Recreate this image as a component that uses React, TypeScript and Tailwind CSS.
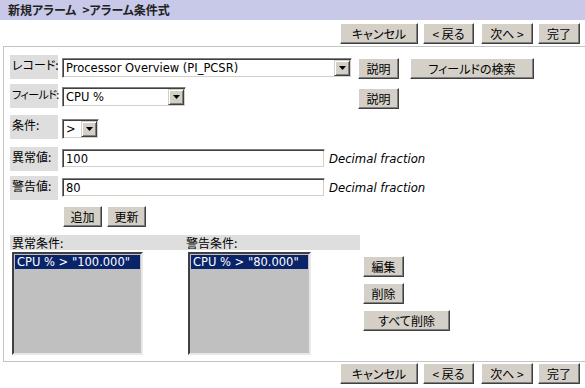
import React from 'react';

const jp = "font-['Noto_Sans_CJK_JP','Noto_Sans_CJK_SC',sans-serif] [font-feature-settings:'palt']";
const latin = "font-['DejaVu_Sans','Noto_Sans_CJK_JP',sans-serif]";

const Btn: React.FC<{ w: string; children: React.ReactNode }> = ({ w, children }) => (
  <button
    className={`${w} h-[21px] shrink-0 bg-[#d4d0c8] border border-t-white border-l-white border-r-[#404040] border-b-[#404040] shadow-[inset_-1px_-1px_0_#808080] text-[12px] leading-none text-black ${jp} flex items-center justify-center`}
  >
    {children}
  </button>
);

const Arrow = () => (
  <div className="w-[16px] h-[16px] shrink-0 bg-[#d4d0c8] border border-t-[#d4d0c8] border-l-[#d4d0c8] border-r-[#404040] border-b-[#404040] shadow-[inset_1px_1px_0_#ffffff,inset_-1px_-1px_0_#808080] flex items-center justify-center">
    <svg width="7" height="4" viewBox="0 0 7 4">
      <path d="M0 0h7L3.5 4z" fill="#000" />
    </svg>
  </div>
);

const Select: React.FC<{ w: string; value: string }> = ({ w, value }) => (
  <div className={`${w} h-[20px] shrink-0 bg-white border border-t-[#808080] border-l-[#808080] border-r-white border-b-white shadow-[inset_1px_1px_0_#404040,inset_-1px_-1px_0_#d4d0c8] flex items-center pl-[3px] pr-[1px]`}>
    <span className={`flex-1 text-[11.5px] leading-[16px] text-black ${latin} whitespace-nowrap overflow-hidden`}>{value}</span>
    <Arrow />
  </div>
);

const Input: React.FC<{ value: string }> = ({ value }) => (
  <div className="w-[263px] h-[19px] shrink-0 bg-white border border-t-[#808080] border-l-[#808080] border-r-white border-b-white shadow-[inset_1px_1px_0_#404040,inset_-1px_-1px_0_#d4d0c8] flex items-center pl-[3px]">
    <span className={`text-[11.5px] leading-[16px] text-black ${latin}`}>{value}</span>
  </div>
);

const Label: React.FC<{ tight?: boolean; children: React.ReactNode }> = ({ tight, children }) => (
  <div
    className={`w-[48px] h-[24px] shrink-0 bg-[#dedede] pl-[2px] pt-[3px] leading-[14px] text-black ${jp} whitespace-nowrap ${
      tight ? 'text-[11px] tracking-[-0.6px]' : 'text-[12px]'
    }`}
  >
    {children}
  </div>
);

const ListBox: React.FC<{ w: string; item: string }> = ({ w, item }) => (
  <div className={`${w} h-[103px] bg-[#c0c0c0] border-2 border-t-[#404040] border-l-[#404040] border-r-[#e8e8e8] border-b-[#e8e8e8] p-[1px]`}>
    <div className={`bg-[#0a246a] text-white text-[11.5px] leading-[14px] pl-[2px] ${latin} whitespace-nowrap`}>{item}</div>
  </div>
);

const NavButtons = () => (
  <div className="flex justify-end pr-[5px]">
    <Btn w="w-[78px]">キャンセル</Btn>
    <div className="ml-[5px]"><Btn w="w-[51px]">&lt; 戻る</Btn></div>
    <div className="ml-[7px]"><Btn w="w-[52px]">次へ &gt;</Btn></div>
    <div className="ml-[5px]"><Btn w="w-[42px]">完了</Btn></div>
  </div>
);

export default function App() {
  return (
    <div className="w-[585px] h-[388px] bg-white overflow-hidden">
      <div className={`h-[20px] bg-[#c8c8e8] pl-[8px] flex items-center gap-[6px] text-[12px] font-bold text-[#222] ${jp}`}>
        <span>新規アラーム</span>
        <span>&gt;アラーム条件式</span>
      </div>
      <div className="pt-[3px]">
        <NavButtons />
      </div>

      <div className="ml-[3px] mt-[2px] h-[316px] border border-r-0 border-[#c4c4c4] pl-[6px] pt-[8px]">
        {/* レコード */}
        <div className="flex items-start">
          <Label>レコード:</Label>
          <div className="ml-[4px] mt-[3px]"><Select w="w-[290px]" value="Processor Overview (PI_PCSR)" /></div>
          <div className="ml-[6px] mt-[3px]"><Btn w="w-[41px]">説明</Btn></div>
          <div className="ml-[11px] mt-[3px]"><Btn w="w-[124px]">フィールドの検索</Btn></div>
        </div>
        {/* フィールド */}
        <div className="flex items-start mt-[5px]">
          <Label tight>フィールド:</Label>
          <div className="ml-[4px] mt-[3px]"><Select w="w-[124px]" value="CPU %" /></div>
          <div className="ml-[172px] mt-[4px]"><Btn w="w-[41px]">説明</Btn></div>
        </div>
        {/* 条件 */}
        <div className="flex items-start mt-[6px]">
          <Label>条件:</Label>
          <div className="ml-[4px] mt-[4px]"><Select w="w-[37px]" value=">" /></div>
        </div>
        {/* 異常値 */}
        <div className="flex items-start mt-[8px]">
          <Label>異常値:</Label>
          <div className="ml-[4px] mt-[2px]"><Input value="100" /></div>
          <span className={`ml-[4px] mt-[4px] text-[11.7px] italic text-black ${latin}`}>Decimal fraction</span>
        </div>
        {/* 警告値 */}
        <div className="flex items-start mt-[5px]">
          <Label>警告値:</Label>
          <div className="ml-[4px] mt-[2px]"><Input value="80" /></div>
          <span className={`ml-[4px] mt-[4px] text-[11.7px] italic text-black ${latin}`}>Decimal fraction</span>
        </div>
        {/* 追加 / 更新 */}
        <div className="flex items-start gap-[5px] ml-[53px] mt-[6px]">
          <Btn w="w-[39px]">追加</Btn>
          <Btn w="w-[39px]">更新</Btn>
        </div>

        {/* 条件リスト */}
        <div className="flex items-start mt-[8px]">
          <div className="w-[350px]">
            <div className={`h-[15px] bg-[#dedede] flex text-[12px] leading-[15px] text-black ${jp}`}>
              <span className="w-[176px] pl-[2px]">異常条件:</span>
              <span>警告条件:</span>
            </div>
            <div className="flex pt-[2px] pl-[2px]">
              <ListBox w="w-[131px]" item={'CPU % > "100.000"'} />
              <div className="ml-[45px]">
                <ListBox w="w-[123px]" item={'CPU % > "80.000"'} />
              </div>
            </div>
          </div>
          <div className="ml-[3px] mt-[21px] flex flex-col gap-[6px]">
            <Btn w="w-[41px]">編集</Btn>
            <Btn w="w-[41px]">削除</Btn>
            <Btn w="w-[87px]">すべて削除</Btn>
          </div>
        </div>
      </div>

      <div className="pt-[1px]">
        <NavButtons />
      </div>
    </div>
  );
}
